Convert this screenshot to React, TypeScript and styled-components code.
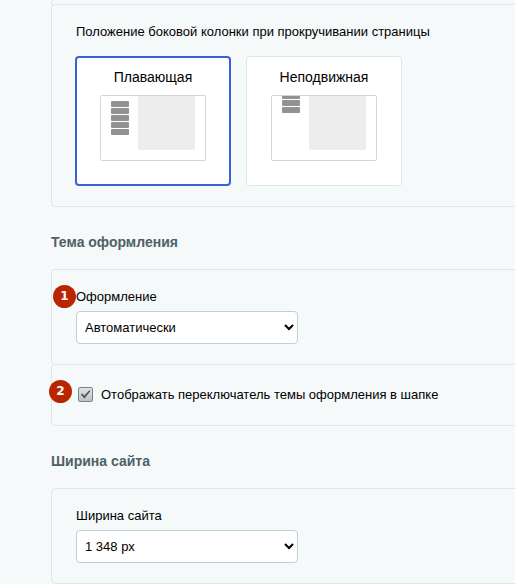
import React from "react";
import styled, { createGlobalStyle } from "styled-components";

const GlobalStyle = createGlobalStyle`
  *, *::before, *::after { box-sizing: border-box; }
  body {
    margin: 0;
    background: #f5f9fa;
    color: #000;
    font: 13px/16px "Liberation Sans", Arial, sans-serif;
    overflow-x: hidden;
  }
`;

const Page = styled.main`
  margin-left: 51px;
`;

const Heading = styled.h2`
  margin: 25px 0 17px;
  color: #4b6267;
  font-size: 14px;
  font-weight: bold;
  line-height: 20px;
`;

const Cell = styled.section`
  position: relative;
  padding: 19px 24px 20px;
  margin-right: -4px;
  border: 1px solid #dce7ed;
  border-radius: 4px;

  & + & {
    margin-top: -1px;
  }
`;

const CellEnd = styled(Cell)`
  padding: 4px 0 0;
  border-top: 0;
`;

const FieldLabel = styled.label`
  display: block;
  margin-bottom: 6px;
`;

const Select = styled.select`
  display: block;
  width: 222px;
  height: 33px;
  padding: 0 4px;
  border: 1px solid #bccfda;
  border-radius: 4px;
  background-color: #fff;
  color: #000;
  font: inherit;
`;

const Group = styled.fieldset`
  margin: 0;
  padding: 0;
  border: 0;
`;

const Legend = styled.legend`
  margin-bottom: 16px;
  padding: 0;
`;

const Options = styled.div`
  display: flex;
  flex-wrap: wrap;
  gap: 15px;
  margin-left: -1px;
`;

const HiddenRadio = styled.input`
  position: absolute;
  opacity: 0;
  pointer-events: none;
`;

const Option = styled.label`
  display: flex;
  flex-direction: column;
  align-items: center;
  gap: 9px;
  width: 156px;
  height: 130px;
  padding-top: 13px;
  border-radius: 4px;
  background: #fff;
  box-shadow: inset 0 0 0 1px #dce8ea;
  font-size: 14px;
  line-height: 17px;
  cursor: pointer;

  &:has(input:checked) {
    box-shadow: inset 0 0 0 2px #3860db;
  }
`;

const Preview = styled.span`
  display: flex;
  gap: 9px;
  width: 106px;
  height: 66px;
  padding: 0 10px;
  overflow: hidden;
  border: 1px solid #d3d5d6;
  border-radius: 2px;
`;

const PreviewMenu = styled.span<{ $scrolled: boolean }>`
  display: flex;
  flex-direction: column;
  gap: 1px;
  width: 18px;
  margin-top: ${(p) => (p.$scrolled ? "-3px" : "5px")};
`;

const PreviewItem = styled.span`
  height: 6px;
  border-radius: 1px;
  background: #929292;
`;

const PreviewContent = styled.span`
  flex: 1;
  height: 54px;
  border-radius: 0 0 2px 2px;
  background: #ececec;
`;

const CheckRow = styled.label`
  display: flex;
  align-items: center;
  gap: 8px;
  min-height: 21px;
  padding-left: 2px;
`;

const CheckBox = styled.span`
  display: grid;
  width: 15px;
  height: 15px;

  > * {
    grid-area: 1 / 1;
  }
`;

const CheckInput = styled.input`
  appearance: none;
  width: 15px;
  height: 15px;
  margin: 0;
  border: 1px solid #7b8489;
  border-radius: 2px;
  background: linear-gradient(#dfe2e4, #bcc2c5);

  &:not(:checked) + svg {
    visibility: hidden;
  }
`;

const Tick = styled.svg`
  pointer-events: none;
`;

const Marker = styled.span<{ $outer?: boolean }>`
  position: absolute;
  top: 15px;
  left: ${(p) => (p.$outer ? "-3px" : "1px")};
  width: 23px;
  height: 23px;
  border-radius: 50%;
  background: #ba2500;
  color: #fff;
  font: bold 12px/22px "DejaVu Sans", Verdana, sans-serif;
  text-align: center;
`;

type LayoutOptionProps = { title: string; items: number; scrolled?: boolean; selected?: boolean };

function LayoutOption({ title, items, scrolled = false, selected }: LayoutOptionProps) {
  return (
    <Option>
      <HiddenRadio type="radio" name="sidebar" defaultChecked={selected} />
      {title}
      <Preview>
        <PreviewMenu $scrolled={scrolled}>
          {Array.from({ length: items }, (_, i) => (
            <PreviewItem key={i} />
          ))}
        </PreviewMenu>
        <PreviewContent />
      </Preview>
    </Option>
  );
}

export default function App() {
  return (
    <>
      <GlobalStyle />
      <Page>
        <CellEnd as="div" />
        <Cell>
          <Group>
            <Legend>Положение боковой колонки при прокручивании страницы</Legend>
            <Options>
              <LayoutOption title="Плавающая" items={5} selected />
              <LayoutOption title="Неподвижная" items={3} scrolled />
            </Options>
          </Group>
        </Cell>

        <Heading>Тема оформления</Heading>
        <Cell>
          <Marker>1</Marker>
          <FieldLabel htmlFor="theme">Оформление</FieldLabel>
          <Select id="theme">
            <option>Автоматически</option>
          </Select>
        </Cell>
        <Cell>
          <Marker $outer>2</Marker>
          <CheckRow>
            <CheckBox>
              <CheckInput type="checkbox" defaultChecked />
              <Tick width="15" height="15" viewBox="0 0 15 15" aria-hidden="true">
                <path
                  d="M2.8 7.6 4.2 6.6 6.2 8.8 11.4 3.2 12.4 4 6.4 11.4Z"
                  fill="#4a5155"
                />
              </Tick>
            </CheckBox>
            Отображать переключатель темы оформления в шапке
          </CheckRow>
        </Cell>

        <Heading>Ширина сайта</Heading>
        <Cell>
          <FieldLabel htmlFor="width">Ширина сайта</FieldLabel>
          <Select id="width">
            <option>1 348 px</option>
          </Select>
        </Cell>
      </Page>
    </>
  );
}
